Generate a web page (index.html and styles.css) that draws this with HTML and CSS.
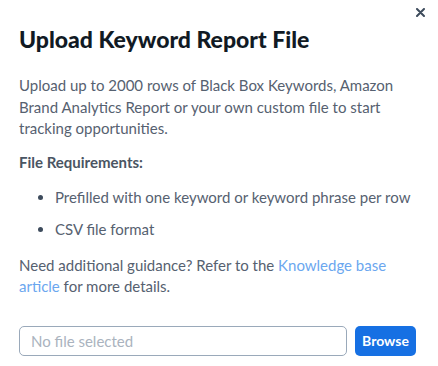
FILE: index.html
```html
<!DOCTYPE html>
<html lang="en">
<head>
    <meta charset="UTF-8">
    <meta name="viewport" content="width=device-width, initial-scale=1.0">
    <title>Upload Keyword Report File</title>
    <link rel="stylesheet" href="styles.css">
</head>
<body>

    <div class="modal">
        <div class="modal-top">
            <button class="close-btn" aria-label="Close">
                <svg width="9" height="9" viewBox="0 0 9 9">
                    <path d="M1 1 L8 8 M8 1 L1 8" stroke="#3d4b5c" stroke-width="2" stroke-linecap="round"/>
                </svg>
            </button>
        </div>

        <h2>Upload Keyword Report File</h2>

        <p class="intro">Upload up to 2000 rows of Black Box Keywords, Amazon Brand Analytics Report or your own custom file to start tracking opportunities.</p>

        <!-- Requirements -->
        <p class="req-title">File Requirements:</p>
        <ul class="req-list">
            <li>Prefilled with one keyword or keyword phrase per row</li>
            <li>CSV file format</li>
        </ul>

        <p class="guidance">Need additional guidance? Refer to the <a href="#">Knowledge base</a><br><a href="#">article</a> for more details.</p>

        <!-- File picker -->
        <div class="file-row">
            <div class="file-field">No file selected</div>
            <button class="browse-btn">Browse</button>
        </div>
    </div>

</body>
</html>
```

FILE: styles.css
```css
body {
    font-family: Lato, "Open Sans", sans-serif;
    margin: 0;
    padding: 0;
    background: #fff;
}
.modal {
    width: 438px;
    height: 366px;
    box-sizing: border-box;
    padding: 0 22px 0 19px;
}
.modal-top {
    display: flex;
    justify-content: flex-end;
    height: 24px;
    margin-right: -9px;
}
.close-btn {
    border: none;
    background: none;
    padding: 0;
    margin-top: 8px;
    width: 9px;
    height: 9px;
    cursor: pointer;
    display: flex;
}
h2 {
    margin: 1px 0 0 0;
    font-size: 23px;
    font-weight: 900;
    color: #111a24;
    line-height: 28px;
}
.intro {
    margin: 22px 0 0 0;
    font-size: 15px;
    line-height: 21.5px;
    color: #566170;
}
.req-title {
    margin: 12px 0 0 0;
    font-size: 15px;
    font-weight: bold;
    line-height: 20px;
    color: #4a5563;
}
.req-list {
    margin: 15px 0 0 0;
    padding-left: 36px;
    font-size: 15px;
    color: #566170;
}
.req-list li {
    line-height: 20px;
    margin-bottom: 13px;
}
.req-list li + li {
    margin-top: -1px;
}
.req-list li::marker {
    color: #3d4b5c;
}
.guidance {
    margin: 16px 0 0 0;
    font-size: 15px;
    line-height: 21px;
    color: #566170;
}
.guidance a {
    color: #6ba7ef;
    text-decoration: none;
}
.file-row {
    display: flex;
    gap: 8px;
    margin-top: 29px;
}
.file-field {
    flex: 1;
    height: 30px;
    box-sizing: border-box;
    border: 1px solid #9aa9ba;
    border-radius: 5px;
    padding: 0 11px;
    display: flex;
    align-items: center;
    font-size: 15px;
    color: #aab3be;
}
.browse-btn {
    height: 30px;
    width: 61px;
    padding: 0;
    border: none;
    border-radius: 5px;
    background-color: #1670e3;
    color: #fff;
    font-family: Lato, sans-serif;
    font-weight: bold;
    font-size: 14px;
    cursor: pointer;
}
```
